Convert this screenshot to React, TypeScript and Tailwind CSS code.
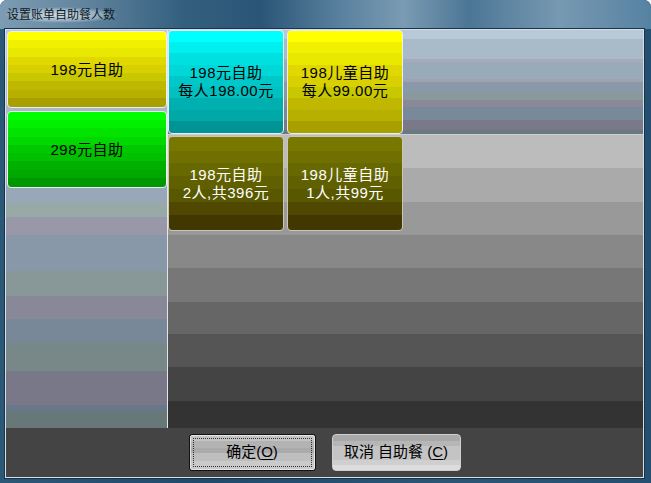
import type { ReactNode } from 'react'

const FONT = "font-['Liberation_Sans','Noto_Sans_CJK_SC',sans-serif]"

type TileProps = {
  tone: string
  lines: string[]
  light?: boolean
  className?: string
}

function Tile({ tone, lines, light, className }: TileProps) {
  return (
    <button
      type="button"
      className={`shrink-0 flex flex-col items-center justify-center rounded-[4px] border leading-[18px] text-[15px] tracking-[0.5px] ${
        light ? 'text-white border-[#c8c8b8]' : 'text-black border-[#eeeeee]'
      } ${tone} ${className ?? ''}`}
    >
      {lines.map((line) => (
        <span key={line}>{line}</span>
      ))}
    </button>
  )
}

function DialogButton({ children, focused }: { children: ReactNode; focused?: boolean }) {
  if (focused) {
    return (
      <button
        type="button"
        className="w-[127px] h-[37px] rounded-[3px] border border-[#121212] flex"
      >
        <div className="flex-1 flex rounded-[2px] border border-[#e6e6e6] p-[2px] bg-[linear-gradient(#c4c4c4_0_15%,#b3b3b3_15%_35%,#aaaaaa_35%_52%,#bebebe_52%_76%,#cacaca_76%)]">
          <div className="flex-1 flex items-center justify-center border border-dotted border-[#303030] text-[15px] text-black">
            {children}
          </div>
        </div>
      </button>
    )
  }
  return (
    <button
      type="button"
      className="w-[129px] h-[37px] rounded-[4px] border border-[#cfcfcf] flex items-center justify-center text-[15px] text-black bg-[linear-gradient(#a9a9a9_0_17%,#b6b6b6_17%_31%,#c4c4c4_31%_71%,#cfcfcf_71%_86%,#dddddd_86%)]"
    >
      {children}
    </button>
  )
}

export default function App() {
  return (
    <div
      className={`w-[651px] h-[483px] flex flex-col rounded-t-[7px] overflow-hidden bg-[linear-gradient(to_right,#2c5878,#1f4a6b_30%,#2a5575_70%,#244f70)] ${FONT}`}
    >
      {/* title bar */}
      <div className="h-[29px] shrink-0 flex items-center pl-[4px] bg-[linear-gradient(to_right,#7d9cb3_0%,#6486a0_12%,#34607f_28%,#2b5576_40%,#58809e_52%,#7a9bb3_62%,#4c7695_72%,#7799b2_86%,#5682a2_100%)]">
        <span className="px-[3px] text-[12px] leading-[16px] text-[#0e1a24] rounded-full bg-[radial-gradient(closest-side,rgba(225,235,242,0.85),rgba(200,215,228,0.5)_70%,transparent)]">
          设置账单自助餐人数
        </span>
      </div>

      {/* client area */}
      <div className="flex-1 ml-[5px] mr-[7px] mb-[5px] flex flex-col border border-[#d6dee6] shadow-[0_0_0_1px_#16344c] bg-[#444444]">
        <div className="h-[398px] shrink-0 flex">
          {/* left column */}
          <div className="w-[162px] shrink-0 flex flex-col gap-[3px] pl-[1px] pt-[1px] border-r border-[#e2e6ea] bg-[linear-gradient(#b8c8d8_0_30px,#a8bac8_30px_88px,#a8a8b8_88px_96px,#98a8b8_96px_172px,#98aaa8_172px_187px,#9898a8_187px_205px,#8898a8_205px_241px,#889898_241px_266px,#888898_266px_289px,#788898_289px_313px,#788888_313px_341px,#787888_341px_375px,#687888_375px_382px,#687878_382px)]">
            <Tile
              className="w-[160px] h-[77px]"
              tone="bg-[linear-gradient(#ffff00_0_11%,#f0f000_11%_22%,#e8e800_22%_33%,#e0d800_33%_44%,#d8d000_44%_55%,#c8c800_55%_66%,#c0b800_66%_77%,#b8b000_77%_88%,#a8a000_88%)]"
              lines={['198元自助']}
            />
            <Tile
              className="w-[160px] h-[77px]"
              tone="bg-[linear-gradient(#00ff00_0_11%,#00f000_11%_22%,#00e400_22%_33%,#00d800_33%_44%,#00c800_44%_55%,#00c000_55%_66%,#00b000_66%_77%,#00a800_77%_88%,#009800_88%)]"
              lines={['298元自助']}
            />
          </div>

          {/* right area */}
          <div className="flex-1 flex flex-col">
            <div className="h-[105px] shrink-0 flex gap-[3px] border-b border-[#cfcfcf] bg-[linear-gradient(#b9c9d7_0_9px,#a9bbc9_9px_29px,#a9a9b9_29px_32px,#99abb9_32px_49px,#a1a1b1_49px_52px,#8999a9_52px_63px,#899999_63px_70px,#898999_70px_77px,#798999_77px_90px,#797989_90px_100px,#697981_100px)]">
              <Tile
                className="w-[116px] h-[104px]"
                tone="bg-[linear-gradient(#00ffff_0_11%,#00f0f0_11%_22%,#00e0e0_22%_33%,#00d8d8_33%_44%,#00c8c8_44%_55%,#00c0c0_55%_66%,#00b0b0_66%_77%,#00a8a8_77%_88%,#009494_88%)]"
                lines={['198元自助', '每人198.00元']}
              />
              <Tile
                className="w-[116px] h-[104px]"
                tone="bg-[linear-gradient(#ffff00_0_11%,#f0f000_11%_22%,#e8e800_22%_33%,#e0d800_33%_44%,#d8d000_44%_55%,#c8c800_55%_66%,#c0b800_66%_77%,#b8b000_77%_88%,#a8a000_88%)]"
                lines={['198儿童自助', '每人99.00元']}
              />
            </div>
            <div className="flex-1 flex gap-[3px] pt-[1px] bg-[linear-gradient(#bcbcbc_0_33px,#aaaaaa_33px_67px,#999999_67px_100px,#888888_100px_133px,#777777_133px_167px,#666666_167px_199px,#555555_199px_232px,#444444_232px_266px,#333333_266px)]">
              <Tile
                light
                className="w-[116px] h-[95px]"
                tone="bg-[linear-gradient(#787800_0_15%,#707000_15%_28%,#686800_28%_42%,#606000_42%_56%,#585800_56%_70%,#504800_70%_84%,#403800_84%)]"
                lines={['198元自助', '2人,共396元']}
              />
              <Tile
                light
                className="w-[116px] h-[95px]"
                tone="bg-[linear-gradient(#787800_0_15%,#707000_15%_28%,#686800_28%_42%,#606000_42%_56%,#585800_56%_70%,#504800_70%_84%,#403800_84%)]"
                lines={['198儿童自助', '1人,共99元']}
              />
            </div>
          </div>
        </div>

        {/* bottom bar */}
        <div className="flex-1 flex items-center justify-center gap-[16px]">
          <DialogButton focused>
            确定(<span className="underline underline-offset-2">O</span>)
          </DialogButton>
          <DialogButton>
            取消 自助餐 (<span className="underline underline-offset-2">C</span>)
          </DialogButton>
        </div>
      </div>
    </div>
  )
}
